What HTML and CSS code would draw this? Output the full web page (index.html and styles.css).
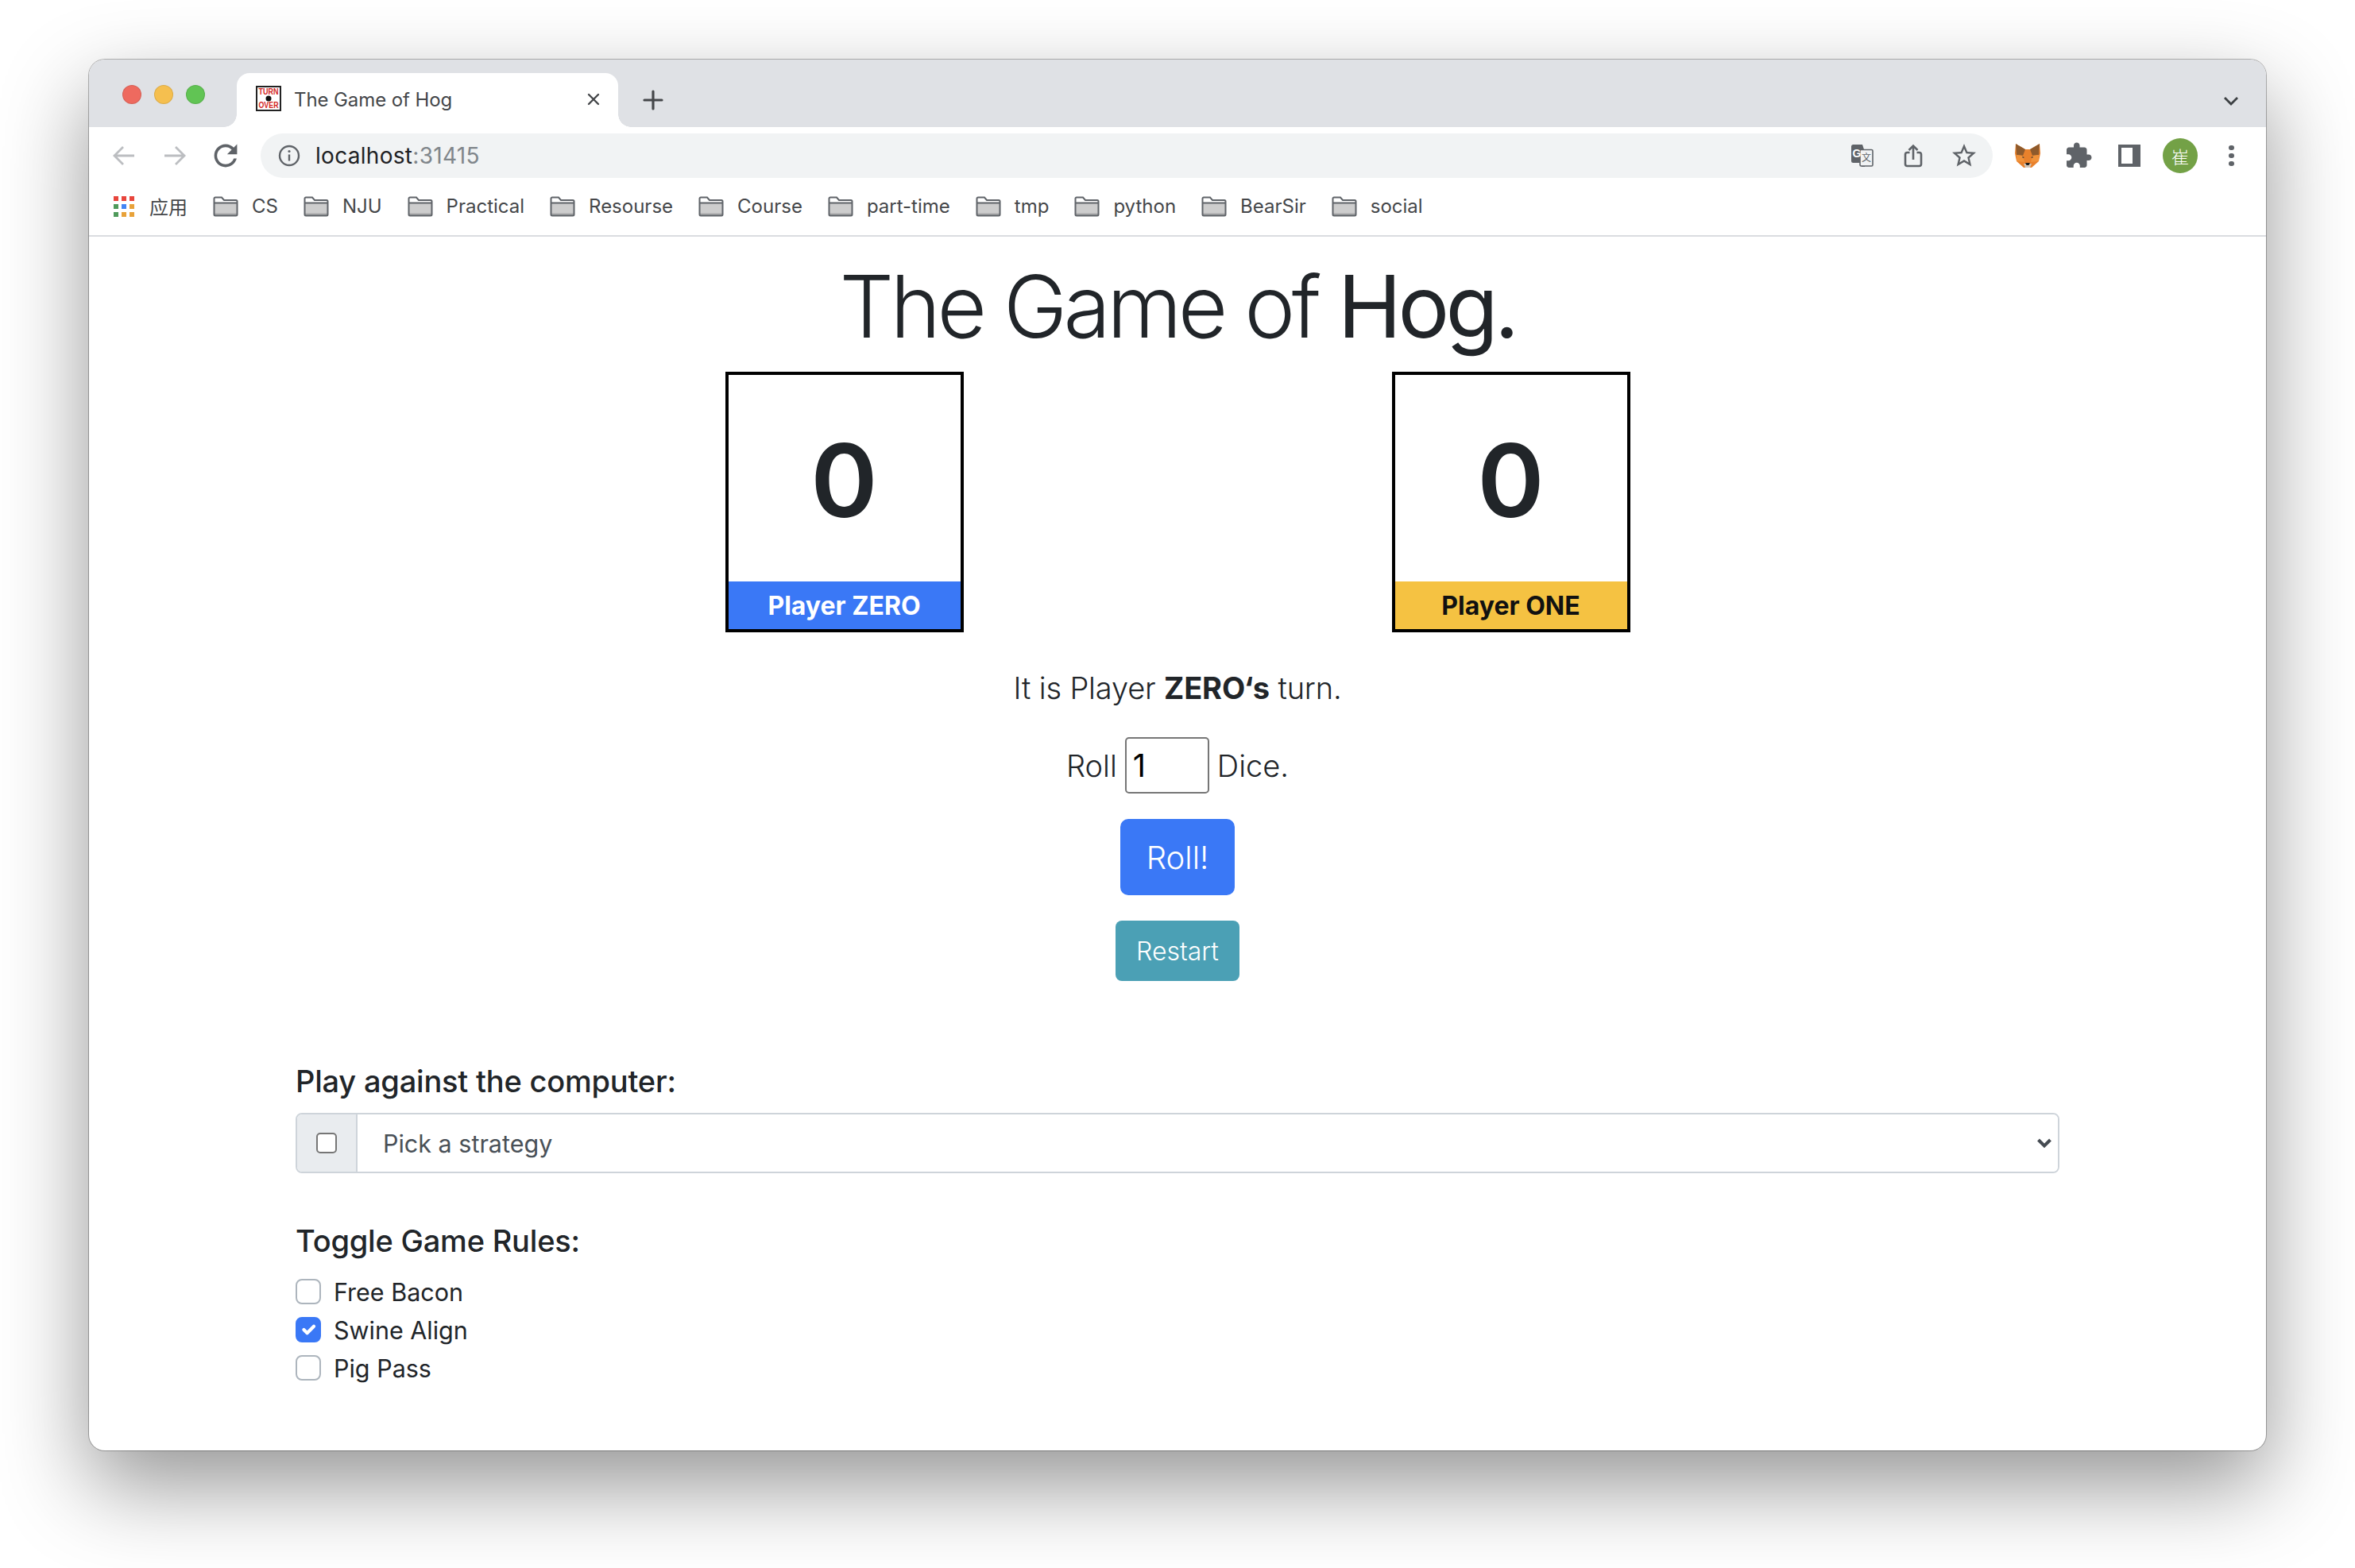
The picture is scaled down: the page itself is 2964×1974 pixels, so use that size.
FILE: index.html
```html
<!DOCTYPE html>
<html lang="en-US">
<head>
<title>The Game of Hog</title>
<meta charset="utf-8">
<link rel="stylesheet" href="styles.css">
</head>
<body>

<svg class="defs" width="0" height="0">
  <symbol id="folder" viewBox="0 0 32 26">
    <path d="M1.5 9h29v14a1.5 1.5 0 0 1-1.5 1.5H3A1.5 1.5 0 0 1 1.5 23z" fill="#cdcdcd"/>
    <path d="M1.5 21.5h29v2a1.5 1.5 0 0 1-1.5 1.5H3a1.5 1.5 0 0 1-1.5-1.5z" fill="#a9aaab"/>
    <path d="M1.5 23V3A1.5 1.5 0 0 1 3 1.500h8l3 3.500h15A1.500 1.500 0 0 1 30.500 6.500V23A1.500 1.500 0 0 1 29 24.500H3A1.500 1.500 0 0 1 1.500 23zM1.500 8.500h29" fill="none" stroke="#5f6368" stroke-width="2"/>
  </symbol>
</svg>

<div class="window">

  <!-- tab strip -->
  <div class="tabstrip">
    <div class="lights">
      <span class="light red"></span>
      <span class="light yellow"></span>
      <span class="light green"></span>
    </div>
    <div class="tab">
      <svg class="favicon" width="32" height="32" viewBox="0 0 32 32">
        <rect x="1" y="1" width="30" height="30" fill="#fff" stroke="#222" stroke-width="2"/>
        <text x="16" y="11" class="fav-text" textLength="25" lengthAdjust="spacingAndGlyphs">TURN</text>
        <circle cx="16" cy="16" r="3.500" fill="#111"/>
        <text x="16" y="28" class="fav-text" textLength="25" lengthAdjust="spacingAndGlyphs">OVER</text>
      </svg>
      <span class="tab-title">The Game of Hog</span>
      <svg class="tab-close" width="18" height="18" viewBox="0 0 18 18"><path d="M3 3l12 12M15 3L3 15" stroke="#45474a" stroke-width="2.400" stroke-linecap="round"/></svg>
    </div>
    <svg class="tab-new" width="26" height="26" viewBox="0 0 26 26"><path d="M13 2v22M2 13h22" stroke="#45474a" stroke-width="3.200" stroke-linecap="round"/></svg>
    <svg class="tab-list" width="20" height="12" viewBox="0 0 20 12"><path d="M2 2l8 8 8-8" fill="none" stroke="#3c4043" stroke-width="2.800"/></svg>
  </div>

  <!-- address bar -->
  <div class="toolbar">
    <svg class="nav-icon" width="36" height="36" viewBox="0 0 36 36"><path d="M31 18H7M17 7L6 18l11 11" fill="none" stroke="#bcbec1" stroke-width="2.800"/></svg>
    <svg class="nav-icon" width="36" height="36" viewBox="0 0 36 36"><path d="M5 18h24M19 7l11 11-11 11" fill="none" stroke="#bcbec1" stroke-width="2.800"/></svg>
    <svg class="nav-icon" width="36" height="36" viewBox="2 2 20 20"><path fill="#5f6368" d="M17.650 6.350C16.200 4.900 14.210 4 12 4c-4.420 0-7.990 3.580-7.990 8s3.570 8 7.990 8c3.730 0 6.840-2.550 7.730-6h-2.080c-.82 2.330-3.040 4-5.650 4-3.310 0-6-2.690-6-6s2.690-6 6-6c1.660 0 3.140.69 4.220 1.780L13 11h7V4l-2.350 2.350z"/></svg>
    <div class="omnibox">
      <svg class="info-icon" width="28" height="28" viewBox="0 0 28 28">
        <circle cx="14" cy="14" r="12" fill="none" stroke="#5f6368" stroke-width="2.400"/>
        <path d="M14 12.500v8" stroke="#5f6368" stroke-width="2.400"/>
        <circle cx="14" cy="8.500" r="1.600" fill="#5f6368"/>
      </svg>
      <span class="url">localhost<span class="url-port">:31415</span></span>
      <div class="omni-actions">
        <svg class="translate-icon" width="28" height="28" viewBox="0 0 28 28">
          <path d="M2.500 0H14l2 6 1 22H13l-1.500-5H2.500A2.500 2.500 0 0 1 0 20.500v-18A2.500 2.500 0 0 1 2.500 0z" fill="#5f6368"/>
          <rect x="11" y="6.500" width="16" height="20.500" rx="1.500" fill="#f1f3f4" stroke="#5f6368" stroke-width="1.600"/>
          <text x="7" y="15.500" class="tr-g">G</text>
          <text x="19" y="21" class="tr-zh">文</text>
        </svg>
        <svg width="24" height="30" viewBox="0 0 24 30"><path d="M7.500 11H4.500A2.500 2.500 0 0 0 2 13.500v12A2.500 2.500 0 0 0 4.500 28h15a2.500 2.500 0 0 0 2.500-2.500v-12A2.500 2.500 0 0 0 19.500 11h-3M12 20V2.500M6.500 8L12 2.500 17.500 8" fill="none" stroke="#5f6368" stroke-width="2.600"/></svg>
        <svg width="36" height="36" viewBox="0 0 24 24"><path fill="#5f6368" d="M22 9.240l-7.190-.62L12 2 9.190 8.630 2 9.240l5.460 4.730L5.820 21 12 17.270 18.180 21l-1.630-7.030L22 9.240zM12 15.400l-3.760 2.270 1-4.280-3.320-2.880 4.380-.38L12 6.100l1.710 4.040 4.380.38-3.320 2.880 1 4.280L12 15.400z"/></svg>
      </div>
    </div>
    <div class="ext-icons">
      <svg class="fox" width="32" height="30" viewBox="0 0 32 30">
        <path d="M1 0l12 7h6L31 0l1 12-2 10-9 8h-10l-9-8-2-10z" fill="#e8812c"/>
        <path d="M1 0l12 7-3 8-8-1zM31 0L19 7l3 8 8-1z" fill="#8e5a2c"/>
        <path d="M2 14l8 1 2 8-10-1zM30 14l-8 1-2 8 10-1z" fill="#f0923a"/>
        <path d="M11 25h10l-2 5h-6z" fill="#d3c4b4"/>
        <path d="M13 24h6l-1.500 3h-3z" fill="#1c1c1c"/>
        <path d="M9 16l3 1-2 1zM23 16l-3 1 2 1z" fill="#333"/>
      </svg>
      <svg class="puzzle" width="36" height="36" viewBox="0 0 24 24"><path fill="#5f6368" d="M20.500 11H19V7c0-1.100-.9-2-2-2h-4V3.500C13 2.120 11.880 1 10.500 1S8 2.120 8 3.500V5H4c-1.100 0-1.990.9-1.990 2v3.800H3.500c1.490 0 2.700 1.210 2.700 2.700s-1.210 2.700-2.700 2.700H2V20c0 1.100.9 2 2 2h3.800v-1.500c0-1.490 1.210-2.700 2.700-2.700 1.490 0 2.700 1.210 2.700 2.700V22H17c1.100 0 2-.9 2-2v-4h1.500c1.380 0 2.500-1.120 2.500-2.500S21.880 11 20.500 11z"/></svg>
      <span class="panel-icon"><span class="panel-hole"></span></span>
      <span class="avatar">崔</span>
      <span class="kebab"><i></i><i></i><i></i></span>
    </div>
  </div>

  <!-- bookmarks -->
  <div class="bookmarks">
    <span class="bm apps-item">
      <span class="apps">
        <i class="c-red"></i><i class="c-red"></i><i class="c-red"></i>
        <i class="c-green"></i><i class="c-blue"></i><i class="c-orange"></i>
        <i class="c-green"></i><i class="c-orange"></i><i class="c-orange"></i>
      </span>
      <span class="bm-zh">应用</span>
    </span>
    <span class="bm"><svg width="32" height="26"><use href="#folder"/></svg>CS</span>
    <span class="bm"><svg width="32" height="26"><use href="#folder"/></svg>NJU</span>
    <span class="bm"><svg width="32" height="26"><use href="#folder"/></svg>Practical</span>
    <span class="bm"><svg width="32" height="26"><use href="#folder"/></svg>Resourse</span>
    <span class="bm"><svg width="32" height="26"><use href="#folder"/></svg>Course</span>
    <span class="bm"><svg width="32" height="26"><use href="#folder"/></svg>part-time</span>
    <span class="bm"><svg width="32" height="26"><use href="#folder"/></svg>tmp</span>
    <span class="bm"><svg width="32" height="26"><use href="#folder"/></svg>python</span>
    <span class="bm"><svg width="32" height="26"><use href="#folder"/></svg>BearSir</span>
    <span class="bm"><svg width="32" height="26"><use href="#folder"/></svg>social</span>
  </div>

  <!-- the page -->
  <div class="page">
    <h1 class="title">The Game of <span class="title-strong">Hog.</span></h1>

    <div class="scores">
      <div class="score-card">
        <div class="score-num">0</div>
        <div class="score-label label-zero">Player ZERO</div>
      </div>
      <div class="score-card">
        <div class="score-num">0</div>
        <div class="score-label label-one">Player ONE</div>
      </div>
    </div>

    <p class="turn">It is Player <strong>ZERO‘s</strong> turn.</p>

    <div class="roll-row">
      <span>Roll</span>
      <input class="roll-input" type="text" value="1">
      <span>Dice.</span>
    </div>

    <button class="btn btn-roll">Roll!</button>
    <button class="btn btn-restart">Restart</button>

    <div class="settings">
      <h5 class="setting-title">Play against the computer:</h5>
      <div class="strategy">
        <span class="strategy-check"><input class="plain-check" type="checkbox"></span>
        <span class="strategy-select">
          <select class="select">
            <option>Pick a strategy</option>
          </select>
          <svg class="select-arrow" width="20" height="14" viewBox="0 0 20 14"><path d="M2.500 3l7.500 7.500L17.500 3" fill="none" stroke="#454b52" stroke-width="4"/></svg>
        </span>
      </div>

      <h5 class="setting-title rules-title">Toggle Game Rules:</h5>
      <label class="rule"><input class="rule-check" type="checkbox">Free Bacon</label>
      <label class="rule"><input class="rule-check" type="checkbox" checked>Swine Align</label>
      <label class="rule"><input class="rule-check" type="checkbox">Pig Pass</label>
    </div>
  </div>

</div>

</body>
</html>
```

FILE: styles.css
```css
html, body { margin: 0; padding: 0; }

body {
  width: 2964px;
  height: 1974px;
  background: #fff;
  padding: 75px 112px 0;
  box-sizing: border-box;
  overflow: hidden;
  font-family: Inter, "Noto Sans CJK SC", sans-serif;
  color: #212529;
}

.defs { display: block; height: 0; }

.window {
  width: 2740px;
  height: 1751px;
  background: #fff;
  border-radius: 20px;
  overflow: hidden;
  box-shadow: 0 0 0 1px rgba(0, 0, 0, .28), 0 44px 110px rgba(0, 0, 0, .42);
  display: flex;
  flex-direction: column;
}

/* tab strip */
.tabstrip {
  height: 85px;
  background: #dfe1e5;
  display: flex;
  align-items: flex-end;
  flex: none;
}

.lights {
  width: 186px;
  height: 85px;
  display: flex;
  gap: 16px;
  padding: 32px 0 0 42px;
  box-sizing: border-box;
}

.light {
  width: 24px;
  height: 24px;
  border-radius: 50%;
  box-sizing: border-box;
  border: 1px solid rgba(0, 0, 0, .1);
}
.red { background: #ee6a5f; }
.yellow { background: #f5bf4f; }
.green { background: #61c454; }

.tab {
  position: relative;
  width: 480px;
  height: 68px;
  background: #fff;
  border-radius: 16px 16px 0 0;
  display: flex;
  align-items: center;
  padding: 0 22px 0 24px;
  box-sizing: border-box;
}

.tab::before, .tab::after {
  content: "";
  position: absolute;
  bottom: 0;
  width: 16px;
  height: 16px;
}
.tab::before { left: -16px; background: radial-gradient(circle at 0 0, #dfe1e5 15.500px, #fff 16px); }
.tab::after { right: -16px; background: radial-gradient(circle at 100% 0, #dfe1e5 15.500px, #fff 16px); }

.favicon { flex: none; margin-top: -4px; }
.fav-text { font: 700 10px "Liberation Sans", sans-serif; fill: #d2231c; text-anchor: middle; }

.tab-title {
  margin-left: 16px;
  font-size: 24px;
  letter-spacing: -.1px;
  color: #45474a;
  flex: 1;
  margin-top: -2px;
}

.tab-close { margin-top: -2px; flex: none; }

.tab-new { margin: 0 0 21px 31px; flex: none; }

.tab-list { margin: 0 34px 27px auto; flex: none; }

/* address bar */
.toolbar {
  height: 72px;
  flex: none;
  display: flex;
  align-items: center;
  padding-left: 26px;
  box-sizing: border-box;
}

.nav-icon { flex: none; margin-right: 28px; }

.omnibox {
  width: 2180px;
  height: 56px;
  margin: 0 0 0 -2px;
  background: #f1f3f4;
  border-radius: 28px;
  display: flex;
  align-items: center;
  padding: 0 0 0 22px;
  box-sizing: border-box;
  flex: none;
}

.url {
  margin-left: 19px;
  font-size: 28px;
  letter-spacing: .3px;
  color: #202124;
}
.url-port { color: #80868b; }

.omni-actions {
  margin-left: auto;
  margin-right: 18px;
  display: flex;
  align-items: center;
  gap: 34px;
}

.translate-icon { margin-right: 4px; }

.tr-g { font: 700 14px "Liberation Sans", sans-serif; fill: #fff; text-anchor: middle; }
.tr-zh { font: 400 12px "Noto Sans CJK SC", sans-serif; fill: #5f6368; text-anchor: middle; }

.ext-icons {
  display: flex;
  align-items: center;
  margin-left: 28px;
}

.fox { margin-right: 30px; }
.puzzle { margin-right: 32px; }

.panel-icon {
  width: 28px;
  height: 28px;
  background: #5f6368;
  display: block;
  padding: 4px 10px 4px 4px;
  box-sizing: border-box;
}
.panel-hole { display: block; width: 14px; height: 20px; background: #fff; }

.avatar {
  width: 44px;
  height: 44px;
  margin-left: 28px;
  border-radius: 50%;
  background: #73a146;
  color: #fff;
  font-size: 22px;
  font-weight: 300;
  font-family: "Noto Sans CJK SC", sans-serif;
  display: flex;
  align-items: center;
  justify-content: center;
}

.kebab {
  margin-left: 39px;
  display: flex;
  flex-direction: column;
  gap: 3.500px;
}
.kebab i { display: block; width: 6.500px; height: 6.500px; border-radius: 50%; background: #5f6368; }

/* bookmarks */
.bookmarks {
  height: 66px;
  flex: none;
  box-sizing: border-box;
  border-bottom: 2px solid #dadce0;
  display: flex;
  align-items: center;
  padding: 0 0 9px 31px;
  font-size: 24px;
  color: #45474a;
  gap: 32px;
}

.bm { display: flex; align-items: center; gap: 17px; white-space: nowrap; }

.apps {
  width: 26px;
  display: grid;
  grid-template-columns: repeat(3, 6px);
  grid-template-rows: repeat(3, 6px);
  gap: 4px;
}
.apps i { display: block; }
.c-red { background: #e8453c; }
.c-green { background: #4f9a5b; }
.c-blue { background: #4285f4; }
.c-orange { background: #e8a23a; }

.apps-item { gap: 19px; }
.bm-zh { font-family: "Noto Sans CJK SC", sans-serif; }

/* page content */
.page {
  flex: 1;
  width: 2220px;
  margin: 0 auto;
  display: flex;
  flex-direction: column;
  align-items: center;
}

.title {
  height: 170px;
  margin: 0;
  padding-top: 10px;
  font-size: 108px;
  line-height: 156px;
  font-weight: 300;
  letter-spacing: -4.700px;
  box-sizing: border-box;
}
.title-strong { font-weight: 400; }

.scores { display: flex; gap: 539px; }

.score-card {
  width: 300px;
  height: 328px;
  border: 4px solid #000;
  box-sizing: border-box;
  display: flex;
  flex-direction: column;
}

.score-num {
  height: 260px;
  font-size: 128px;
  font-weight: 600;
  line-height: 266px;
  text-align: center;
}

.score-label {
  height: 60px;
  line-height: 61px;
  font-size: 32px;
  font-weight: 700;
  text-align: center;
}
.label-zero { background: #3a78f6; color: #fff; }
.label-one { background: #f5c242; color: #111; }

.turn {
  margin: 40px 0 0;
  font-size: 38px;
  line-height: 60px;
  font-weight: 300;
  letter-spacing: -.15px;
}
.turn strong { font-weight: 700; }

.roll-row {
  display: flex;
  align-items: center;
  margin-top: 32px;
  height: 71px;
  font-size: 38px;
  font-weight: 300;
  gap: 10px;
}

.roll-input {
  width: 106px;
  height: 71px;
  box-sizing: border-box;
  border: 2px solid #767676;
  border-radius: 5px;
  padding: 0 8px;
  font: 400 40px Inter, sans-serif;
  color: #000;
}

.btn {
  display: block;
  border: 0;
  color: #fff;
  font-family: Inter, sans-serif;
  font-weight: 300;
}

.btn-roll {
  width: 144px;
  height: 96px;
  margin-top: 32px;
  background: #3a78f6;
  border-radius: 10px;
  font-size: 40px;
}

.btn-restart {
  width: 156px;
  height: 76px;
  margin-top: 32px;
  background: #4ba0b5;
  border-radius: 8px;
  font-size: 32px;
}

.settings {
  width: 100%;
  margin-top: 102px;
}

.setting-title {
  margin: 0;
  font-size: 38px;
  line-height: 48px;
  font-weight: 500;
  letter-spacing: -.2px;
}

.strategy {
  display: flex;
  height: 76px;
  margin-top: 16px;
  box-sizing: border-box;
  border: 2px solid #ced4da;
  border-radius: 8px;
  overflow: hidden;
}

.strategy-check {
  width: 76px;
  background: #e9ecef;
  border-right: 2px solid #ced4da;
  box-sizing: border-box;
  display: flex;
  align-items: center;
  justify-content: center;
  flex: none;
}

.plain-check {
  appearance: none;
  width: 26px;
  height: 26px;
  margin: 0;
  background: #fff;
  border: 2px solid #767676;
  border-radius: 5px;
}

.strategy-select { position: relative; flex: 1; display: flex; }

.select {
  appearance: none;
  flex: 1;
  border: 0;
  background: #fff;
  padding: 0 32px;
  font: 400 30.500px Inter, sans-serif;
  color: #495057;
  outline: none;
}

.select-arrow { position: absolute; right: 7px; top: 29px; }

.rules-title { margin-top: 61px; }

.rule {
  display: flex;
  align-items: center;
  height: 48px;
  font-size: 30.500px;
  font-weight: 400;
}
.rules-title + .rule { margin-top: 16px; }

.rule-check {
  appearance: none;
  width: 32px;
  height: 32px;
  margin: 0 16px 0 0;
  background: #fff center / 100% no-repeat;
  border: 2px solid #adb5bd;
  border-radius: 8px;
  box-sizing: border-box;
  flex: none;
}

.rule-check:checked {
  background-color: #3a78f6;
  border-color: #3a78f6;
  background-image: url("data:image/svg+xml,%3csvg xmlns='http://www.w3.org/2000/svg' viewBox='0 0 20 20'%3e%3cpath fill='none' stroke='%23fff' stroke-linecap='round' stroke-linejoin='round' stroke-width='3' d='M6 10l3 3l6-6'/%3e%3c/svg%3e");
}
```
